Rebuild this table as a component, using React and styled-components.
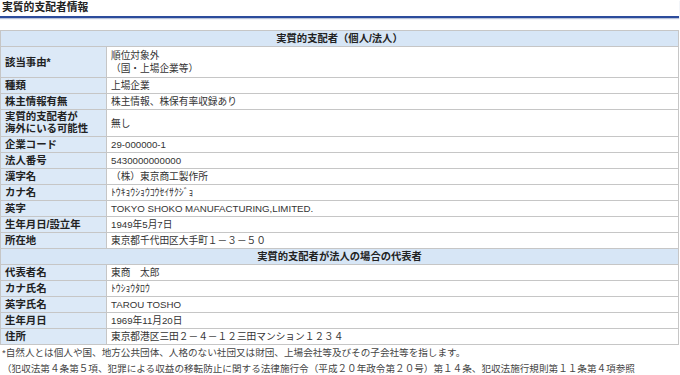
import React from "react";
import styled, { createGlobalStyle } from "styled-components";

const GlobalStyle = createGlobalStyle`
  body {
    margin: 0;
    background: #fff;
    font-family: "Liberation Sans", "Noto Sans CJK JP", sans-serif;
    color: #333;
  }
`;

const corp = [
  { label: "種類", value: "上場企業" },
  { label: "株主情報有無", value: "株主情報、株保有率収録あり" },
  { label: ["実質的支配者が", "海外にいる可能性"], value: "無し", tall: true },
  { label: "企業コード", value: "29-000000-1" },
  { label: "法人番号", value: "5430000000000" },
  { label: "漢字名", value: "（株）東京商工製作所" },
  { label: "カナ名", value: "ﾄｳｷｮｳｼｮｳｺｳｾｲｻｸｼﾞｮ" },
  { label: "英字", value: "TOKYO SHOKO MANUFACTURING,LIMITED." },
  { label: "生年月日/設立年", value: "1949年5月7日" },
  { label: "所在地", value: "東京都千代田区大手町１－３－５０" },
];

const rep = [
  { label: "代表者名", value: "東商　太郎" },
  { label: "カナ氏名", value: "ﾄｳｼｮｳﾀﾛｳ" },
  { label: "英字氏名", value: "TAROU TOSHO" },
  { label: "生年月日", value: "1969年11月20日" },
  { label: "住所", value: "東京都港区三田２－４－１２三田マンション１２３４" },
];

const App = () => {
  const renderRow = (row) => (
    <tr key={String(row.label)}>
      <Label $tall={row.tall}>
        {Array.isArray(row.label)
          ? row.label.map((l) => <div key={l}>{l}</div>)
          : row.label}
      </Label>
      <Value>{row.value}</Value>
    </tr>
  );

  return (
    <Page>
      <GlobalStyle />
      <Title>実質的支配者情報</Title>
      <Table>
        <tbody>
          <tr>
            <Head colSpan={2}>実質的支配者（個人/法人）</Head>
          </tr>
          <tr>
            <Label>該当事由*</Label>
            <Value $spaced>
              <div>順位対象外</div>
              <div>（国・上場企業等）</div>
            </Value>
          </tr>
          {corp.map(renderRow)}
          <tr>
            <Head colSpan={2}>実質的支配者が法人の場合の代表者</Head>
          </tr>
          {rep.map(renderRow)}
        </tbody>
      </Table>
      <Notes>
        <p>*自然人とは個人や国、地方公共団体、人格のない社団又は財団、上場会社等及びその子会社等を指します。</p>
        <p>（犯収法第４条第５項、犯罪による収益の移転防止に関する法律施行令（平成２０年政令第２０号）第１４条、犯収法施行規則第１１条第４項参照</p>
      </Notes>
    </Page>
  );
};

export default App;

const Page = styled.div`
  width: 680px;
  padding: 0 1px 0 0;
  box-sizing: border-box;
`;

const Title = styled.h2`
  margin: 0;
  padding: 0 2px 1px;
  font-size: 10.8px;
  line-height: 15px;
  font-weight: bold;
  color: #222;
  border-bottom: 2px solid #2c4c9c;
  box-shadow: 0 1px 1px #b9c3da;
`;

const Table = styled.table`
  width: 100%;
  margin-top: 12px;
  border-collapse: collapse;
  font-size: 9.7px;
  line-height: 13px;
  td {
    border: 1px solid #c6c6c6;
    padding: 1px 4px;
    vertical-align: middle;
  }
`;

const Head = styled.td`
  background: #d7e6f6;
  text-align: center;
  font-weight: bold;
  font-size: 10.3px;
  color: #222;
`;

const Label = styled.td`
  width: 97px;
  background: #dce9f7;
  font-weight: bold;
  font-size: 10.4px;
  color: #222;
  line-height: ${(p) => (p.$tall ? "12px" : "13px")};
  white-space: nowrap;
`;

const Value = styled.td`
  background: #fff;
  color: #333;
  && {
    padding-top: ${(p) => (p.$spaced ? "2px" : "1px")};
    padding-bottom: ${(p) => (p.$spaced ? "2px" : "1px")};
  }
`;

const Notes = styled.div`
  padding: 0 2px;
  font-size: 9.6px;
  line-height: 16px;
  color: #444;
  p {
    margin: 0;
  }
`;
